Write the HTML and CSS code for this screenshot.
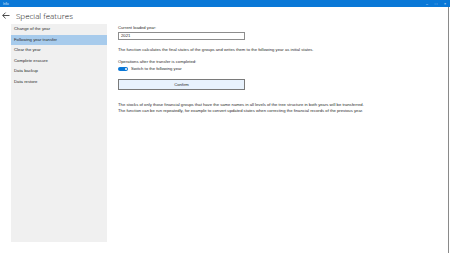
FILE: index.html
```html
<!DOCTYPE html>
<html>
<head>
<meta charset="utf-8">
<link rel="stylesheet" href="styles.css">
</head>
<body>
<div class="window">
  <div class="titlebar">
    <span class="app-name">Inflo</span>
    <div class="controls">
      <span class="ctl">&#8211;</span>
      <span class="ctl">&#9633;</span>
      <span class="ctl">&#215;</span>
    </div>
  </div>
  <div class="page">
    <div class="header">
      <svg class="back" width="8" height="7" viewBox="0 0 8 7"><path d="M7.5 3.5H0.8M3.6 0.6L0.7 3.5L3.6 6.4" fill="none" stroke="#222" stroke-width="0.8"/></svg>
      <h1 class="title">Special features</h1>
    </div>
    <div class="body">
      <nav class="sidebar">
        <div class="nav-item">Change of the year</div>
        <div class="nav-item selected">Following year transfer</div>
        <div class="nav-item">Clear the year</div>
        <div class="nav-item">Complete erasure</div>
        <div class="nav-item">Data backup</div>
        <div class="nav-item">Data restore</div>
      </nav>
      <main class="content">
        <div class="label">Current loaded year:</div>
        <div class="input">2021</div>
        <p class="text desc">The function calculates the final states of the groups and writes them to the following year as initial states.</p>
        <div class="label ops">Operations after the transfer is completed:</div>
        <div class="toggle-row">
          <span class="toggle"><span class="knob"></span></span>
          <span class="text">Switch to the following year</span>
        </div>
        <div class="button">Confirm</div>
        <p class="text note">The stocks of only those financial groups that have the same names in all levels of the tree structure in both years will be transferred.<br>The function can be run repeatedly, for example to convert updated states when correcting the financial records of the previous year.</p>
      </main>
    </div>
  </div>
</div>
</body>
</html>
```
FILE: styles.css
```css
html, body {
  margin: 0;
  padding: 0;
  background: #ffffff;
}
body {
  font-family: "Liberation Sans", Arial, sans-serif;
  color: #2a2a2a;
}
.window {
  width: 450px;
  height: 253px;
  display: flex;
  flex-direction: column;
  overflow: hidden;
}
.titlebar {
  height: 7px;
  background: #0a78d7;
  display: flex;
  align-items: center;
  justify-content: space-between;
  color: #ffffff;
  font-size: 3px;
}
.app-name {
  margin-left: 3px;
  opacity: 0.8;
}
.controls {
  display: flex;
  gap: 7px;
  margin-right: 4px;
  font-size: 3.5px;
}
.page {
  flex: 1;
  display: flex;
  flex-direction: column;
  border-right: 1px solid #8a8a8a;
  margin-right: 1px;
}
.header {
  height: 17px;
  display: flex;
  align-items: center;
  gap: 6px;
  padding-left: 2px;
}
.back {
  display: block;
}
.title {
  margin: 0;
  font-family: "Open Sans", "Noto Sans", sans-serif;
  font-weight: 300;
  font-size: 8px;
  color: #111;
}
.body {
  flex: 1;
  display: flex;
  padding-left: 11px;
  padding-bottom: 11px;
}
.sidebar {
  width: 96px;
  background: #f0f0f0;
  display: flex;
  flex-direction: column;
}
.nav-item {
  height: 10.6px;
  line-height: 10.6px;
  padding-left: 3px;
  font-size: 4.25px;
  color: #2a2a2a;
}
.nav-item.selected {
  background: #a7cbec;
}
.content {
  margin-left: 11px;
  display: flex;
  flex-direction: column;
  align-items: flex-start;
  font-size: 4.2px;
}
.label {
  margin-top: 1px;
  height: 5px;
  line-height: 5px;
}
.input {
  margin-top: 1.5px;
  width: 123px;
  height: 6px;
  line-height: 6px;
  border: 0.8px solid #8d8d8d;
  padding-left: 2px;
}
.text {
  margin: 0;
}
.desc {
  margin-top: 7.5px;
  line-height: 5px;
}
.ops {
  margin-top: 7px;
}
.toggle-row {
  margin-top: 2px;
  display: flex;
  align-items: center;
  gap: 3px;
  height: 5px;
}
.toggle {
  width: 10px;
  height: 4px;
  border-radius: 2px;
  background: #0a78d7;
  position: relative;
  display: block;
}
.knob {
  position: absolute;
  right: 1px;
  top: 1px;
  width: 2px;
  height: 2px;
  border-radius: 50%;
  background: #fff;
}
.button {
  margin-top: 7.5px;
  width: 125px;
  height: 9px;
  line-height: 9px;
  border: 0.8px solid #7a7a7a;
  background: #e8f2fd;
  text-align: center;
}
.note {
  margin-top: 12.5px;
  line-height: 6.3px;
}
```
